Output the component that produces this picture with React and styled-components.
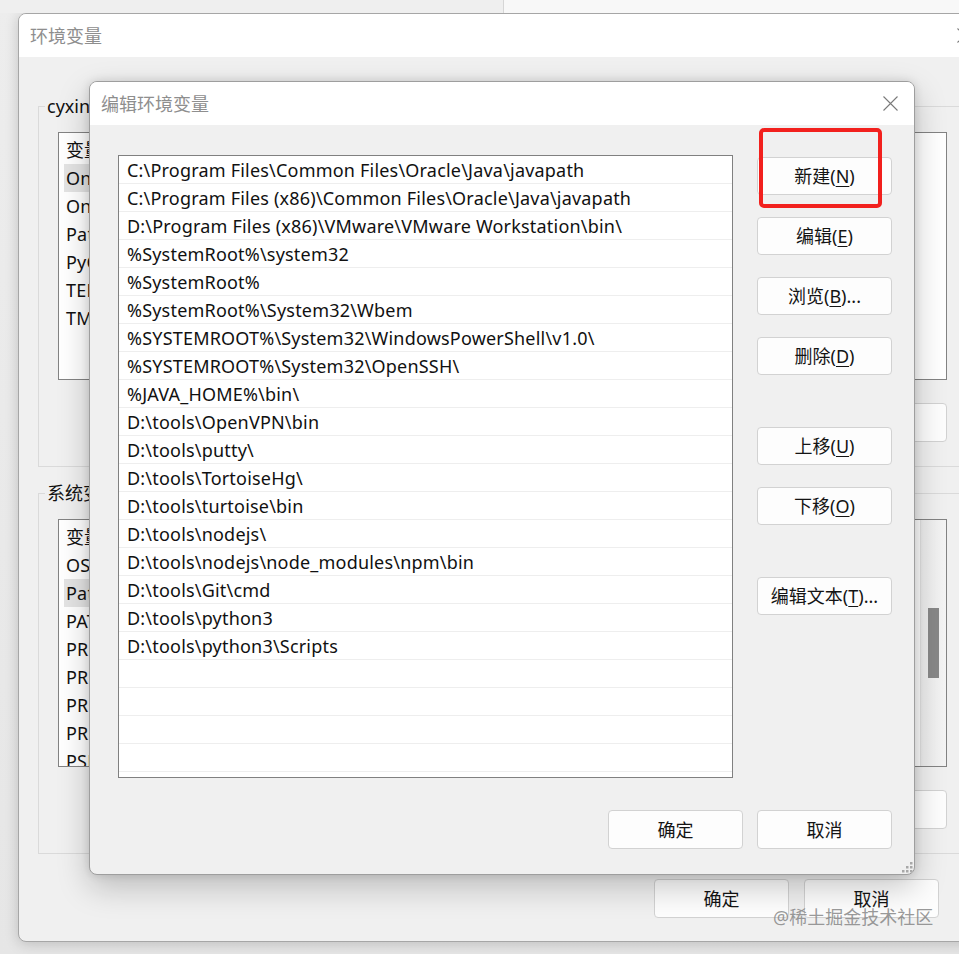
import React from 'react';
import styled, { createGlobalStyle } from 'styled-components';

const GlobalStyle = createGlobalStyle`
  html, body { margin: 0; padding: 0; }
  body {
    width: 959px; height: 954px; overflow: hidden; background: #ebebeb;
    font-family: "Noto Sans", "Noto Sans CJK SC", sans-serif;
  }
`;

const FONT = `"Noto Sans", "Noto Sans CJK SC", sans-serif`;

const Screen = styled.div`
  position: relative;
  width: 959px;
  height: 954px;
  overflow: hidden;
  background: linear-gradient(#ededed, #e6e6e6);
  font-family: ${FONT};
`;

const TopStrip = styled.div`
  display: flex;
  height: 13px;
`;

const StripPane = styled.div`
  width: ${p => p.$w || 'auto'};
  flex: ${p => (p.$w ? '0 0 auto' : '1')};
  background: ${p => p.$bg};
  border-right: ${p => (p.$divider ? '1px solid #d6d6d6' : 'none')};
`;

const OuterWindow = styled.div`
  margin-left: 18px;
  width: 970px;
  height: 929px;
  box-sizing: border-box;
  border: 1px solid #a6a6a6;
  border-radius: 8px;
  background: #f0f0f0;
  box-shadow: 0 2px 14px rgba(0, 0, 0, 0.18);
  display: flex;
  flex-direction: column;
  overflow: hidden;
`;

const TitleBar = styled.div`
  height: 43px;
  flex: 0 0 auto;
  background: #ffffff;
  display: flex;
  align-items: center;
  justify-content: space-between;
  padding-left: 11px;
`;

const TitleText = styled.span`
  font-size: 18px;
  color: #8e8e8e;
  line-height: 1;
`;

const CloseBox = styled.div`
  width: ${p => p.$w}px;
  height: 100%;
  display: flex;
  align-items: center;
  justify-content: center;
`;

const CloseIcon = () => (
  <svg width="15" height="15" viewBox="0 0 15 15">
    <path d="M0.5 0.5 L14.5 14.5 M14.5 0.5 L0.5 14.5" stroke="#7a7a7a" strokeWidth="1.1" fill="none" />
  </svg>
);

const OuterBody = styled.div`
  display: flex;
  flex-direction: column;
  padding: 0 20px 0 19px;
`;

const Group = styled.div`
  position: relative;
  margin-top: ${p => p.$mt}px;
  border: 1px solid #dadada;
  padding: 25px 19px 24px 19px;
  display: flex;
  flex-direction: column;
`;

const GroupLabel = styled.span`
  position: absolute;
  top: -13px;
  left: 6px;
  padding: 0 2px;
  line-height: 24px;
  font-size: 18px;
  color: #111;
  background: #f0f0f0;
  white-space: nowrap;
`;

const VarList = styled.div`
  height: 248px;
  box-sizing: border-box;
  border: 1px solid #838383;
  background: #fff;
  display: flex;
  overflow: hidden;
`;

const VarListContent = styled.div`
  flex: 1;
  display: flex;
  flex-direction: column;
`;

const VarHeader = styled.div`
  height: 31px;
  flex: 0 0 auto;
  display: flex;
  align-items: center;
  padding-left: 7px;
  font-size: 18px;
  color: #111;
`;

const VarRow = styled.div`
  height: 28px;
  flex: 0 0 auto;
  margin: 0 ${p => (p.$selected ? 60 : 5)}px 0 5px;
  padding-left: 2px;
  display: flex;
  align-items: center;
  font-size: 18px;
  letter-spacing: 0.2px;
  color: #111;
  background: ${p => (p.$selected ? '#e4e4e4' : 'transparent')};
  white-space: nowrap;
  overflow: hidden;
`;

const VarName = styled.span`
  width: 280px;
  flex: 0 0 auto;
`;

const Scrollbar = styled.div`
  width: 26px;
  flex: 0 0 auto;
  background: linear-gradient(90deg, #ececec, #f4f4f4);
  border-left: 1px solid #e2e2e2;
  box-sizing: border-box;
  padding-left: 7px;
`;

const ScrollThumb = styled.div`
  width: 11px;
  height: 70px;
  margin-top: 88px;
  background: #888888;
`;

const ButtonRow = styled.div`
  display: flex;
  justify-content: flex-end;
  gap: ${p => p.$gap}px;
  margin-top: ${p => p.$mt}px;
  margin-right: ${p => p.$mr || 0}px;
`;

const Button = styled.button`
  width: 135px;
  height: ${p => p.$h || 38}px;
  box-sizing: border-box;
  padding: 0;
  background: #fdfdfd;
  border: 1px solid #d2d2d2;
  border-radius: 4px;
  font-family: ${FONT};
  font-size: 18px;
  color: #141414;
  display: flex;
  align-items: center;
  justify-content: center;
  line-height: 1;
  white-space: nowrap;
`;

const Accel = styled.span`
  text-decoration: underline;
  text-underline-offset: 3px;
  text-decoration-thickness: 1px;
`;

const Dialog = styled.div`
  position: absolute;
  left: 89px;
  top: 81px;
  width: 826px;
  height: 794px;
  box-sizing: border-box;
  border: 1px solid #9e9e9e;
  border-radius: 8px;
  background: #f0f0f0;
  box-shadow: 0 12px 32px rgba(0, 0, 0, 0.22), 0 0 10px rgba(0, 0, 0, 0.12);
  display: flex;
  flex-direction: column;
  overflow: hidden;
`;

const DialogBody = styled.div`
  display: flex;
  flex-direction: column;
  padding: 30px 22px 0 28px;
`;

const DialogMain = styled.div`
  display: flex;
  gap: 24px;
`;

const PathList = styled.div`
  width: 615px;
  height: 623px;
  box-sizing: border-box;
  border: 1px solid #808080;
  background: #fff;
  overflow: hidden;
  display: flex;
  flex-direction: column;
`;

const PathRow = styled.div`
  height: 28px;
  flex: 0 0 auto;
  box-sizing: border-box;
  border-bottom: 1px solid #eeeeee;
  padding-left: 8px;
  display: flex;
  align-items: center;
  font-size: 18px;
  letter-spacing: 0.2px;
  color: #111;
  white-space: nowrap;
`;

const ActionColumn = styled.div`
  display: flex;
  flex-direction: column;
  gap: 52px;
  padding-top: 2px;
`;

const ActionStack = styled.div`
  display: flex;
  flex-direction: column;
  gap: 22px;
`;

const ResizeGrip = styled.svg`
  position: absolute;
  right: 1px;
  bottom: 1px;
`;

const Highlight = styled.div`
  position: absolute;
  left: 759px;
  top: 128px;
  width: 123px;
  height: 80px;
  box-sizing: border-box;
  border: 4px solid #f2201d;
  border-radius: 5px;
`;

const Watermark = styled.span`
  position: absolute;
  left: 773px;
  top: 905px;
  font-size: 18px;
  line-height: 24px;
  color: rgba(135, 135, 135, 0.85);
  white-space: nowrap;
`;

const paths = [
  'C:\\Program Files\\Common Files\\Oracle\\Java\\javapath',
  'C:\\Program Files (x86)\\Common Files\\Oracle\\Java\\javapath',
  'D:\\Program Files (x86)\\VMware\\VMware Workstation\\bin\\',
  '%SystemRoot%\\system32',
  '%SystemRoot%',
  '%SystemRoot%\\System32\\Wbem',
  '%SYSTEMROOT%\\System32\\WindowsPowerShell\\v1.0\\',
  '%SYSTEMROOT%\\System32\\OpenSSH\\',
  '%JAVA_HOME%\\bin\\',
  'D:\\tools\\OpenVPN\\bin',
  'D:\\tools\\putty\\',
  'D:\\tools\\TortoiseHg\\',
  'D:\\tools\\turtoise\\bin',
  'D:\\tools\\nodejs\\',
  'D:\\tools\\nodejs\\node_modules\\npm\\bin',
  'D:\\tools\\Git\\cmd',
  'D:\\tools\\python3',
  'D:\\tools\\python3\\Scripts',
];

const userVars = [
  ['OneDrive', 'C:\\Users\\cyxing\\OneDrive', true],
  ['OneDriveConsumer', 'C:\\Users\\cyxing\\OneDrive'],
  ['Path', 'C:\\Users\\cyxing\\AppData\\Local\\Microsoft\\WindowsApps;'],
  ['PyCharm Community Edition', 'D:\\tools\\PyCharm\\bin;'],
  ['TEMP', 'C:\\Users\\cyxing\\AppData\\Local\\Temp'],
  ['TMP', 'C:\\Users\\cyxing\\AppData\\Local\\Temp'],
];

const sysVars = [
  ['OS', 'Windows_NT'],
  ['Path', 'C:\\Program Files\\Common Files\\Oracle\\Java\\javapath;', true],
  ['PATHEXT', '.COM;.EXE;.BAT;.CMD;.VBS;.VBE;.JS;.JSE;.WSF;.WSH;.MSC'],
  ['PROCESSOR_ARCHITECTURE', 'AMD64'],
  ['PROCESSOR_IDENTIFIER', 'Intel64 Family 6 Model 158'],
  ['PROCESSOR_LEVEL', '6'],
  ['PROCESSOR_REVISION', '9e0a'],
  ['PSModulePath', '%ProgramFiles%\\WindowsPowerShell\\Modules;'],
];

const Label = ({ text, accel, tail = '' }) => (
  <>
    {text}({accel ? <Accel>{accel}</Accel> : null}){tail}
  </>
);

const VariableList = ({ rows, scroll }) => (
  <VarList>
    <VarListContent>
      <VarHeader>
        <VarName>变量</VarName>
        <span>值</span>
      </VarHeader>
      {rows.map(([n, v, sel]) => (
        <VarRow key={n} $selected={sel}>
          <VarName>{n}</VarName>
          <span>{v}</span>
        </VarRow>
      ))}
    </VarListContent>
    {scroll && (
      <Scrollbar>
        <ScrollThumb />
      </Scrollbar>
    )}
  </VarList>
);

const gripDots = [
  [8, 0], [4, 4], [8, 4], [0, 8], [4, 8], [8, 8],
];

export default function App() {
  const rows = [...paths];
  while (rows.length < 23) rows.push('');
  return (
    <Screen>
      <GlobalStyle />
      <TopStrip>
        <StripPane $w="503px" $bg="#efefef" $divider />
        <StripPane $bg="#f8f8f8" />
      </TopStrip>
      <OuterWindow>
        <TitleBar>
          <TitleText>环境变量</TitleText>
          <CloseBox $w={46}>
            <CloseIcon />
          </CloseBox>
        </TitleBar>
        <OuterBody>
          <Group $mt={49}>
            <GroupLabel>cyxing 的用户变量(U)</GroupLabel>
            <VariableList rows={userVars} />
            <ButtonRow $gap={14} $mt={23}>
              <Button $h={39}><Label text="新建" accel="N" tail="..." /></Button>
              <Button $h={39}><Label text="编辑" accel="E" tail="..." /></Button>
              <Button $h={39}><Label text="删除" accel="D" /></Button>
            </ButtonRow>
          </Group>
          <Group $mt={26}>
            <GroupLabel>系统变量(S)</GroupLabel>
            <VariableList rows={sysVars} scroll />
            <ButtonRow $gap={14} $mt={23}>
              <Button $h={39}><Label text="新建" accel="W" tail="..." /></Button>
              <Button $h={39}><Label text="编辑" accel="I" tail="..." /></Button>
              <Button $h={39}><Label text="删除" accel="L" /></Button>
            </ButtonRow>
          </Group>
          <ButtonRow $gap={15} $mt={25} $mr={28}>
            <Button $h={39}>确定</Button>
            <Button $h={39}>取消</Button>
          </ButtonRow>
        </OuterBody>
      </OuterWindow>

      <Dialog>
        <TitleBar>
          <TitleText>编辑环境变量</TitleText>
          <CloseBox $w={48}>
            <CloseIcon />
          </CloseBox>
        </TitleBar>
        <DialogBody>
          <DialogMain>
            <PathList>
              {rows.map((p, i) => (
                <PathRow key={i}>{p}</PathRow>
              ))}
            </PathList>
            <ActionColumn>
              <ActionStack>
                <Button><Label text="新建" accel="N" /></Button>
                <Button><Label text="编辑" accel="E" /></Button>
                <Button><Label text="浏览" accel="B" tail="..." /></Button>
                <Button><Label text="删除" accel="D" /></Button>
              </ActionStack>
              <ActionStack>
                <Button><Label text="上移" accel="U" /></Button>
                <Button><Label text="下移" accel="O" /></Button>
              </ActionStack>
              <ActionStack>
                <Button><Label text="编辑文本" accel="T" tail="..." /></Button>
              </ActionStack>
            </ActionColumn>
          </DialogMain>
          <ButtonRow $gap={14} $mt={32}>
            <Button $h={39}>确定</Button>
            <Button $h={39}>取消</Button>
          </ButtonRow>
        </DialogBody>
        <ResizeGrip width="12" height="12" viewBox="0 0 12 12">
          {gripDots.map(([x, y]) => (
            <rect key={`${x}-${y}`} x={x + 1} y={y + 1} width="2.5" height="2.5" fill="#a8a8a8" />
          ))}
        </ResizeGrip>
      </Dialog>

      <Highlight />
      <Watermark>@稀土掘金技术社区</Watermark>
    </Screen>
  );
}
